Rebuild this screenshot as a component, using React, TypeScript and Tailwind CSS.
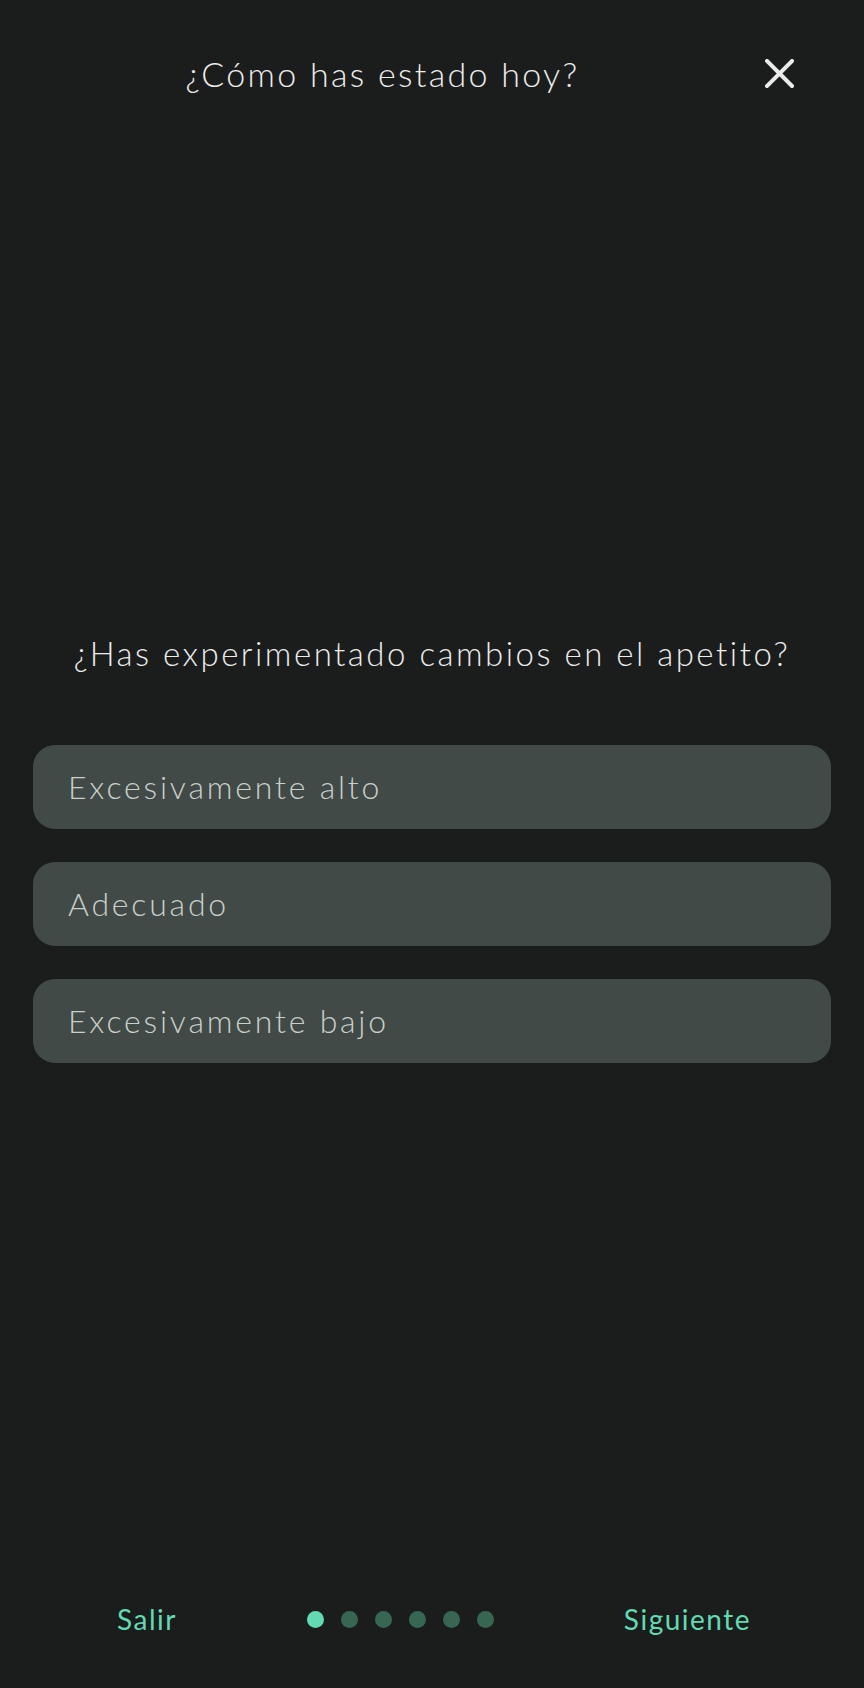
const options = ["Excesivamente alto", "Adecuado", "Excesivamente bajo"];

function CloseIcon() {
  return (
    <svg width="29" height="29" viewBox="0 0 29 29" fill="none">
      <path d="M2 2 L27 27 M27 2 L2 27" stroke="#ebebeb" strokeWidth="4" strokeLinecap="square" />
    </svg>
  );
}

export default function App() {
  return (
    <div
      className="w-full h-[1688px] bg-[#1b1d1c] flex flex-col"
      style={{ fontFamily: "Lato, 'Noto Sans', sans-serif" }}
    >
      {/* header */}
      <div className="h-[146px] flex items-center pr-[70px]">
        <h1 className="flex-1 text-center text-[34px] font-light text-[#ececec] tracking-[2.3px]">
          ¿Cómo has estado hoy?
        </h1>
        <button className="w-[29px] h-[29px] flex items-center justify-center">
          <CloseIcon />
        </button>
      </div>

      <div className="mt-[485px] px-[33px]">
        <h2 className="text-center text-[33px] leading-[44px] font-light text-[#ececec] tracking-[2.5px]">
          ¿Has experimentado cambios en el apetito?
        </h2>

        <div className="mt-[70px] flex flex-col gap-[33px]">
          {options.map((o) => (
            <button
              key={o}
              className="h-[84px] w-full rounded-[22px] bg-[#414a46] text-left pl-[35px] text-[32px] font-light text-[#c9cfca] tracking-[2.8px]"
            >
              {o}
            </button>
          ))}
        </div>
      </div>

      <div className="flex-1" />

      {/* footer */}
      <div className="h-[138px] flex items-center justify-between pl-[117px] pr-[113px]">
        <button className="text-[28px] text-[#62dab3] tracking-[1.5px]">Salir</button>
        <div className="flex items-center gap-[17px]">
          <span className="w-[17px] h-[17px] rounded-full bg-[#62dab3]" />
          <span className="w-[17px] h-[17px] rounded-full bg-[#376653]" />
          <span className="w-[17px] h-[17px] rounded-full bg-[#376653]" />
          <span className="w-[17px] h-[17px] rounded-full bg-[#376653]" />
          <span className="w-[17px] h-[17px] rounded-full bg-[#376653]" />
          <span className="w-[17px] h-[17px] rounded-full bg-[#376653]" />
        </div>
        <button className="text-[28px] text-[#62dab3] tracking-[1.5px]">Siguiente</button>
      </div>
    </div>
  );
}
